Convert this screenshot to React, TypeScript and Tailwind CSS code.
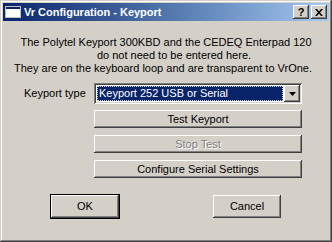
const raised =
  "shadow-[inset_-1px_-1px_#404040,inset_1px_1px_#ffffff,inset_-2px_-2px_#808080,inset_2px_2px_#d4d0c8]";

function Btn({
  label,
  disabled,
  className = "",
}: {
  label: string;
  disabled?: boolean;
  className?: string;
}) {
  return (
    <div
      className={`flex items-center justify-center bg-[#d4d0c8] ${raised} ${className}`}
    >
      {disabled ? (
        <span className="text-[#808080] [text-shadow:1px_1px_0_#ffffff]">{label}</span>
      ) : (
        <span className="text-black">{label}</span>
      )}
    </div>
  );
}

function CaptionBtn({ children }: { children: React.ReactNode }) {
  return (
    <div
      className={`w-[16px] h-[14px] flex items-center justify-center bg-[#d4d0c8] ${raised}`}
    >
      {children}
    </div>
  );
}

export default function App() {
  return (
    <div
      className="w-[332px] h-[242px] bg-[#d4d0c8] p-[3px] flex flex-col text-[11px] leading-[13px] text-black shadow-[inset_-1px_-1px_#404040,inset_1px_1px_#d4d0c8,inset_-2px_-2px_#808080,inset_2px_2px_#ffffff]"
      style={{ fontFamily: "Tahoma, 'Liberation Sans', Arial, sans-serif" }}
    >
      {/* title bar */}
      <div className="h-[18px] flex items-center pl-[2px] pr-[2px] bg-gradient-to-r from-[#0a246a] to-[#a6caf0]">
        <svg width="16" height="14" viewBox="0 0 16 14" className="mr-[3px]">
          <rect x="0.5" y="1.5" width="15" height="11" fill="#ffffff" stroke="#c0c0c0" />
          <rect x="1" y="2" width="14" height="2" fill="#0a246a" />
        </svg>
        <span className="text-white font-bold">Vr Configuration - Keyport</span>
        <div className="ml-auto flex">
          <CaptionBtn>
            <span className="font-bold text-[11px] leading-none">?</span>
          </CaptionBtn>
          <div className="w-[2px]" />
          <CaptionBtn>
            <svg width="8" height="7" viewBox="0 0 8 7">
              <path d="M0 0h2l2 2.5L6 0h2L5 3.5 8 7H6L4 4.5 2 7H0l3-3.5z" fill="#000" />
            </svg>
          </CaptionBtn>
        </div>
      </div>

      {/* message */}
      <div className="mt-[15px] flex flex-col items-center">
        <div>The Polytel Keyport 300KBD and the CEDEQ Enterpad 120</div>
        <div className="ml-[16px]">do not need to be entered here.</div>
        <div className="mr-[6px]">They are on the keyboard loop and are transparent to VrOne.</div>
      </div>

      {/* keyport type row */}
      <div className="mt-[8px] flex items-center">
        <span className="ml-[21px] w-[70px]">Keyport type</span>
        <div className="w-[208px] h-[21px] bg-white p-[2px] flex shadow-[inset_1px_1px_#808080,inset_-1px_-1px_#ffffff,inset_2px_2px_#404040,inset_-2px_-2px_#d4d0c8]">
          <div className="flex-1 m-[1px] bg-[#0a246a] text-white flex items-center pl-[2px] outline-1 outline-dotted outline-[#d4d0c8] -outline-offset-1">
            Keyport 252 USB or Serial
          </div>
          <div className={`w-[16px] bg-[#d4d0c8] flex items-center justify-center ${raised}`}>
            <svg width="7" height="4" viewBox="0 0 7 4">
              <path d="M0 0h7L3.5 4z" fill="#000" />
            </svg>
          </div>
        </div>
      </div>

      {/* action buttons */}
      <div className="ml-[91px] w-[208px] mt-[6px] flex flex-col gap-[7px]">
        <Btn label="Test Keyport" className="h-[18px]" />
        <Btn label="Stop Test" disabled className="h-[18px]" />
        <Btn label="Configure Serial Settings" className="h-[18px]" />
      </div>

      {/* OK / Cancel */}
      <div className="mt-[16px] flex">
        <div className="ml-[47px] w-[70px] h-[25px] border border-black">
          <Btn label="OK" className="w-full h-full" />
        </div>
        <Btn label="Cancel" className="ml-[93px] w-[68px] h-[23px] mt-[1px]" />
      </div>
    </div>
  );
}
